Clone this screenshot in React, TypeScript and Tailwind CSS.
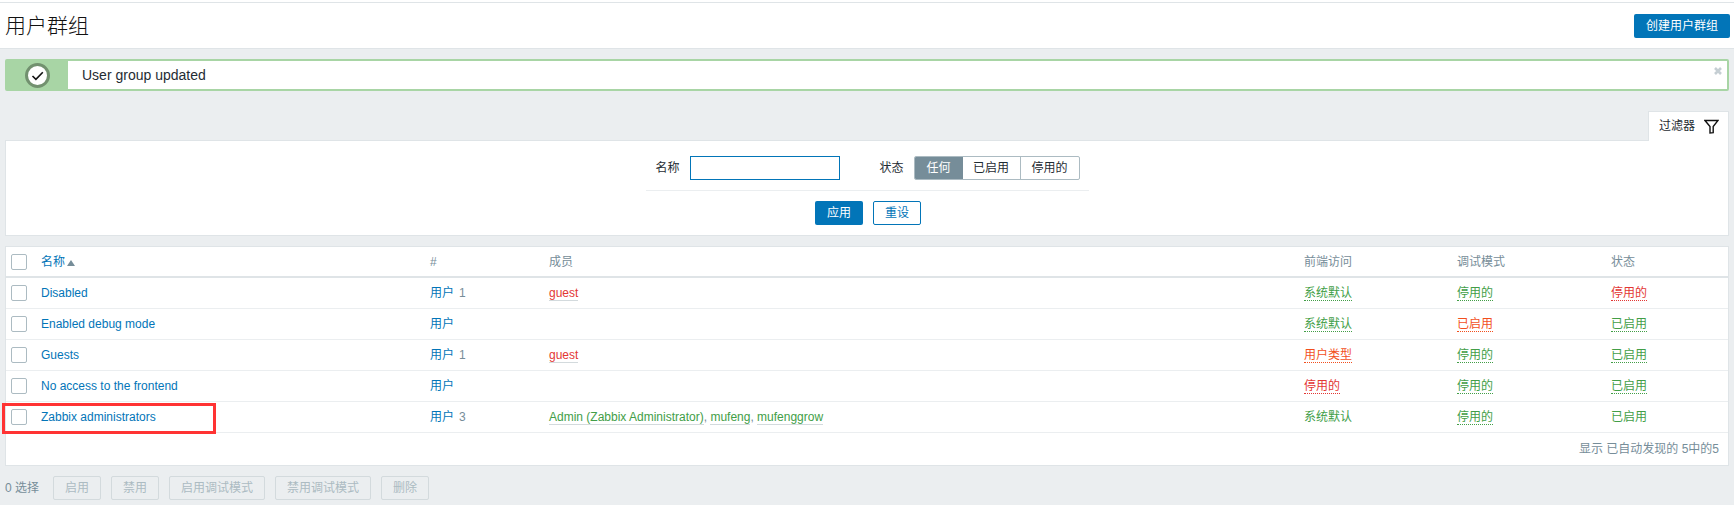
const font = "[font-family:'Liberation_Sans','Noto_Sans_CJK_SC',sans-serif]"

const green = "text-[#429e47] border-[#429e47]"
const red = "text-[#e33734] border-[#e33734]"
const orange = "text-[#f24f1d] border-[#f24f1d]"

type Flag = { label: string; tone: string; dotted?: boolean }

const rows: {
  name: string
  users: string
  members: { label: string; tone: string }[]
  frontend: Flag
  debug: Flag
  status: Flag
}[] = [
  {
    name: "Disabled",
    users: "1",
    members: [{ label: "guest", tone: "text-[#e33734]" }],
    frontend: { label: "系统默认", tone: green, dotted: true },
    debug: { label: "停用的", tone: green, dotted: true },
    status: { label: "停用的", tone: red, dotted: true },
  },
  {
    name: "Enabled debug mode",
    users: "",
    members: [],
    frontend: { label: "系统默认", tone: green, dotted: true },
    debug: { label: "已启用", tone: orange, dotted: true },
    status: { label: "已启用", tone: green, dotted: true },
  },
  {
    name: "Guests",
    users: "1",
    members: [{ label: "guest", tone: "text-[#e33734]" }],
    frontend: { label: "用户类型", tone: orange, dotted: true },
    debug: { label: "停用的", tone: green, dotted: true },
    status: { label: "已启用", tone: green, dotted: true },
  },
  {
    name: "No access to the frontend",
    users: "",
    members: [],
    frontend: { label: "停用的", tone: red, dotted: true },
    debug: { label: "停用的", tone: green, dotted: true },
    status: { label: "已启用", tone: green, dotted: true },
  },
  {
    name: "Zabbix administrators",
    users: "3",
    members: [
      { label: "Admin (Zabbix Administrator)", tone: "text-[#429e47]" },
      { label: "mufeng", tone: "text-[#429e47]" },
      { label: "mufenggrow", tone: "text-[#429e47]" },
    ],
    frontend: { label: "系统默认", tone: green },
    debug: { label: "停用的", tone: green, dotted: true },
    status: { label: "已启用", tone: green },
  },
]

function Checkbox() {
  return <span className="block h-4 w-4 rounded-[2px] border border-[#acbbc2] bg-white" />
}

function FlagText({ flag }: { flag: Flag }) {
  return (
    <span className={`inline-block h-[15px] leading-[15px] ${flag.tone} ${flag.dotted ? "border-b border-dotted" : ""}`}>
      {flag.label}
    </span>
  )
}

function ActionButton({ label, width }: { label: string; width: string }) {
  return (
    <button className={`h-6 rounded-[2px] border border-[#d3dadd] bg-[#ebeef0] text-[#acbbc2] ${width}`}>{label}</button>
  )
}

export default function App() {
  return (
    <div className={`relative h-[505px] overflow-hidden bg-[#ebeef0] text-xs text-[#1f2c33] ${font}`}>
      <div className="h-[2px] bg-white" />
      <header className="flex h-[47px] items-center justify-between border-y border-[#dfe4e7] bg-white pl-[5px] pr-[4px]">
        <h1 className="text-[21px] font-light leading-none text-[#111]">用户群组</h1>
        <button className="h-6 w-24 rounded-[2px] bg-[#0275b8] text-white">创建用户群组</button>
      </header>

      <div className="flex flex-col px-[5px] pt-[10px]">
        {/* Message */}
        <div className="relative flex h-8 rounded-[2px] border-2 border-[#a8d5a5] bg-white">
          <div className="flex w-[61px] items-center justify-center bg-[#a8d5a5] pr-[1px]">
            <svg width="25" height="25" viewBox="0 0 25 25">
              <circle cx="12.5" cy="12.5" r="11" fill="#fff" stroke="#72916f" strokeWidth="3" />
              <path d="M7.5 13l3.4 3.4L17.8 9.2" fill="none" stroke="#111" strokeWidth="1.6" />
            </svg>
          </div>
          <span className="pl-[14px] text-sm leading-7">User group updated</span>
          <svg
            width="8"
            height="8"
            viewBox="0 0 8 8"
            className="absolute right-[5px] top-[6px]"
            stroke="#c5ced3"
            strokeWidth="2.6"
          >
            <path d="M1 1l6 6M7 1l-6 6" />
          </svg>
        </div>

        {/* Filter tab */}
        <div className="z-10 mt-5 -mb-px flex h-[30px] w-[81px] items-center gap-[9px] self-end border-x border-t border-[#dfe4e7] bg-white pb-px pl-[10px]">
          <span>过滤器</span>
          <svg width="15" height="15" viewBox="0 0 15 15" fill="none" stroke="#111" strokeWidth="1.4">
            <path d="M1 1.5h13L9.2 7.5v6.2L6 14V7.5z" />
          </svg>
        </div>

        {/* Filter panel */}
        <div className="flex h-24 flex-col items-center border border-[#dfe4e7] bg-white pt-[15px]">
          <div className="flex h-[35px] w-[443px] items-start border-b border-[#ebeef0] pl-[10px]">
            <span className="mr-[10px] leading-6">名称</span>
            <input className="h-6 w-[150px] border border-[#0275b8] bg-white" />
            <span className="ml-10 mr-[10px] leading-6">状态</span>
            <div className="flex h-6 overflow-hidden rounded-[2px] border border-[#acbbc2]">
              <span className="w-12 bg-[#768d99] text-center leading-[22px] text-white">任何</span>
              <span className="w-[58px] border-r border-[#acbbc2] text-center leading-[22px]">已启用</span>
              <span className="w-[58px] text-center leading-[22px]">停用的</span>
            </div>
          </div>
          <div className="ml-[2px] mt-[10px] flex gap-[10px]">
            <button className="h-6 w-12 rounded-[2px] bg-[#0275b8] text-white">应用</button>
            <button className="h-6 w-12 rounded-[2px] border border-[#0275b8] bg-white text-[#0275b8]">重设</button>
          </div>
        </div>

        {/* Table */}
        <div className="mt-[10px] h-[220px] border border-[#dfe4e7] bg-white">
          <table className="w-full table-fixed border-collapse">
            <colgroup>
              <col className="w-[35px]" />
              <col className="w-[389px]" />
              <col className="w-[119px]" />
              <col className="w-[755px]" />
              <col className="w-[153px]" />
              <col className="w-[154px]" />
              <col />
            </colgroup>
            <thead>
              <tr className="h-[30px] border-b-2 border-[#dfe4e7] text-left text-[#768d99]">
                <th className="pl-[5px] font-normal">
                  <Checkbox />
                </th>
                <th className="font-normal text-[#0275b8]">
                  <span className="flex items-center gap-[2px]">
                    名称
                    <svg width="8" height="6" viewBox="0 0 8 6" className="mt-[2px]">
                      <path d="M4 0l4 6H0z" fill="#768d99" />
                    </svg>
                  </span>
                </th>
                <th className="font-normal">#</th>
                <th className="font-normal">成员</th>
                <th className="font-normal">前端访问</th>
                <th className="font-normal">调试模式</th>
                <th className="font-normal">状态</th>
              </tr>
            </thead>
            <tbody>
              {rows.map((row) => (
                <tr key={row.name} className="h-[31px] border-b border-[#ebeef0]">
                  <td className="pl-[5px]">
                    <Checkbox />
                  </td>
                  <td className="text-[#0275b8]">{row.name}</td>
                  <td>
                    <span className="text-[#0275b8]">用户</span>
                    {row.users && <span className="ml-[5px] text-[#768d99]">{row.users}</span>}
                  </td>
                  <td>
                    {row.members.map((member, index) => (
                      <span key={member.label}>
                        {index > 0 && <span className="text-[#768d99]">, </span>}
                        <span
                          className={`inline-block h-[15px] border-b border-[#d3dadd] leading-[15px] ${member.tone}`}
                        >
                          {member.label}
                        </span>
                      </span>
                    ))}
                  </td>
                  <td>
                    <FlagText flag={row.frontend} />
                  </td>
                  <td>
                    <FlagText flag={row.debug} />
                  </td>
                  <td>
                    <FlagText flag={row.status} />
                  </td>
                </tr>
              ))}
            </tbody>
          </table>
          <div className="pr-[9px] pt-[8px] text-right text-[#768d99]">显示 已自动发现的 5中的5</div>
        </div>

        {/* Actions */}
        <div className="mt-[10px] flex items-center gap-[10px]">
          <span className="mr-[4px] text-[#768d99]">0 选择</span>
          <ActionButton label="启用" width="w-12" />
          <ActionButton label="禁用" width="w-12" />
          <ActionButton label="启用调试模式" width="w-24" />
          <ActionButton label="禁用调试模式" width="w-24" />
          <ActionButton label="删除" width="w-12" />
        </div>
      </div>

      {/* Red annotation box drawn over the screenshot */}
      <div className="absolute left-[2px] top-[403px] h-[31px] w-[214px] border-[3px] border-[#ff3333]" />
    </div>
  )
}
